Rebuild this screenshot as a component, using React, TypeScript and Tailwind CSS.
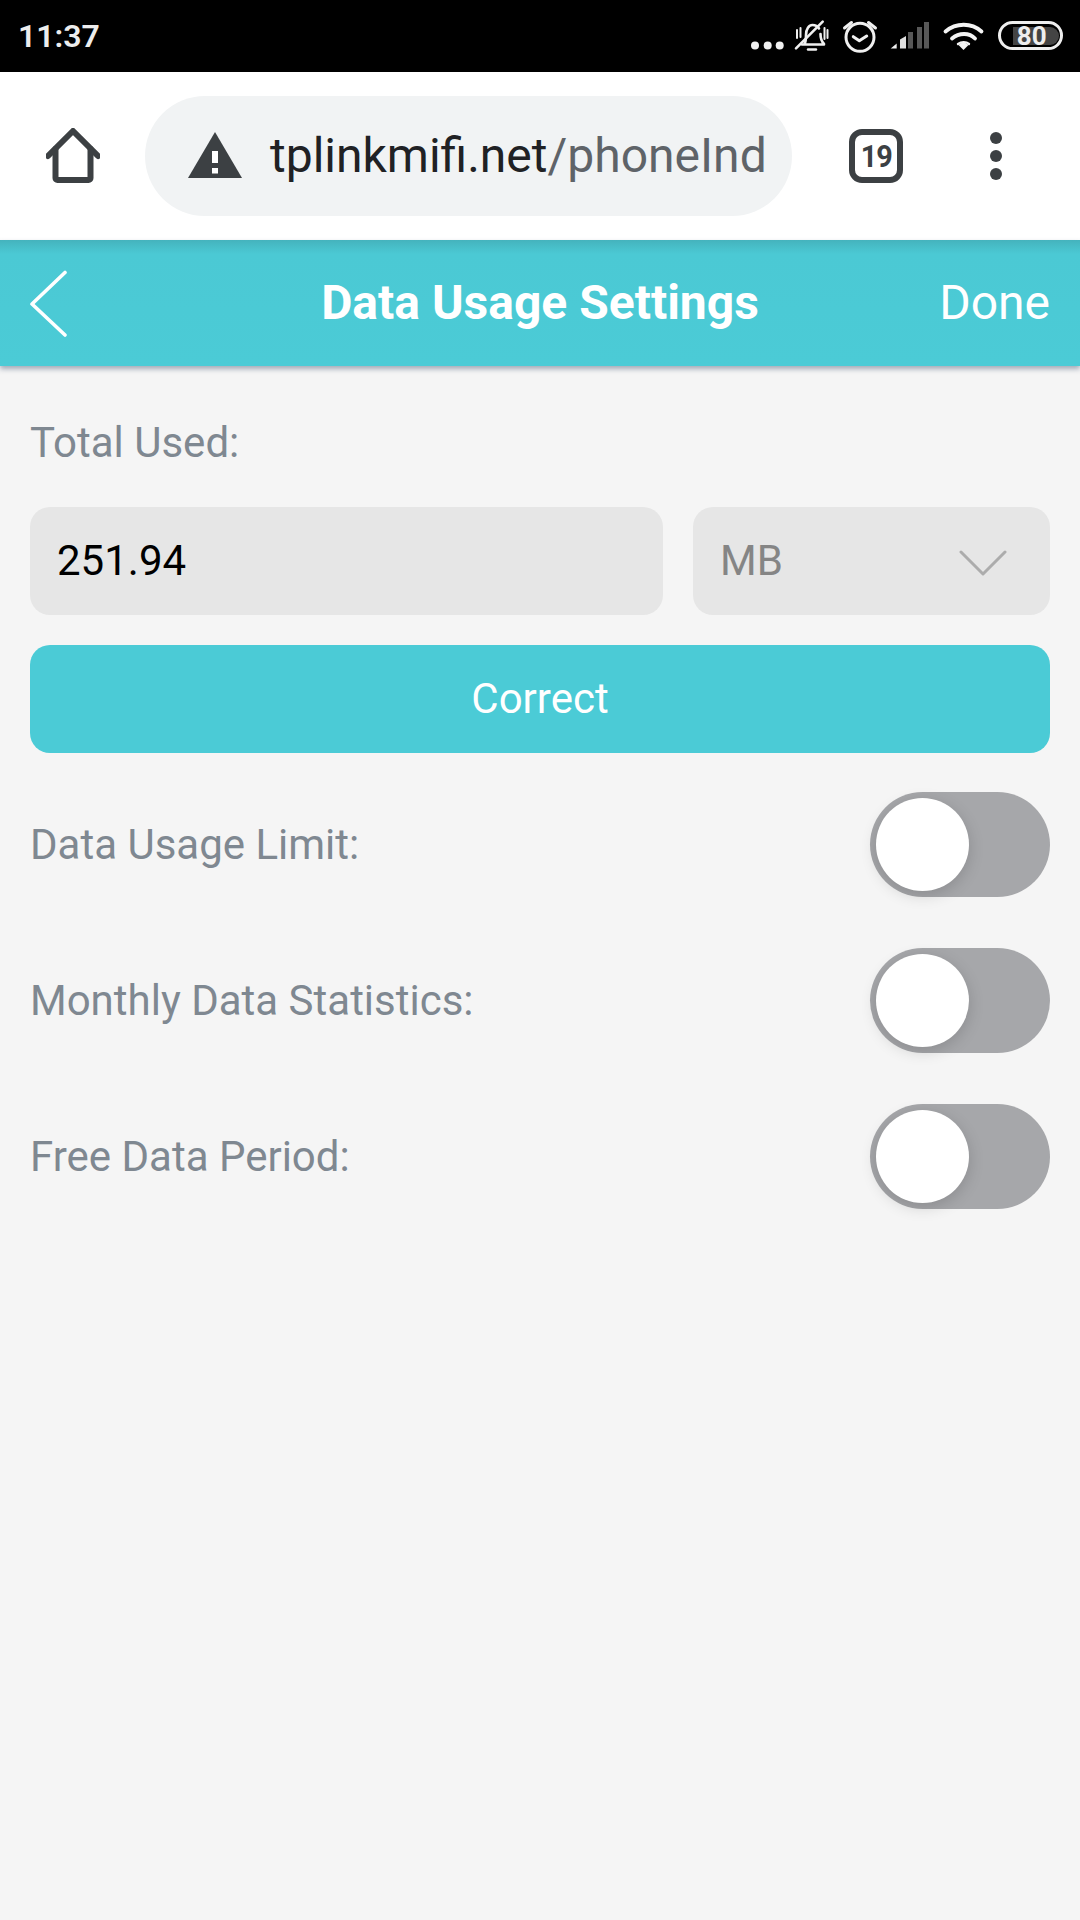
import React from "react";

function StatusIcons() {
  return (
    <svg width="320" height="40" viewBox="0 0 320 40" fill="none" className="block">
      <g fill="#f2f2f2">
        <circle cx="9" cy="29.500" r="4" />
        <circle cx="21.700" cy="29.500" r="4" />
        <circle cx="33.700" cy="29.500" r="4" />
      </g>
      <g stroke="#f0f0f0" strokeWidth="2.600" strokeLinecap="round" strokeLinejoin="round">
        <path d="M56 28.500h22M58.500 28c1.500-2.500 1.500-5 1.500-9c0-6 3-10 6.500-10c3 0 5 1 6.500 3.500M74.500 18c0 4 1 7.500 3.500 10" />
        <path d="M50 32.300L76.700 5.700" />
        <path d="M62 33.500h8" strokeWidth="2.400" />
        <path d="M51 14v8M54.500 12v9M78.500 12v11M81.500 14v8" strokeWidth="2" />
      </g>
      <g stroke="#f0f0f0" strokeWidth="3" strokeLinecap="round" strokeLinejoin="round">
        <circle cx="114" cy="21.300" r="14" />
        <path d="M107.300 20.700l6 4l7.400-4.700" />
        <path d="M98.500 12l7-5.500M122.500 6.500l7 5.500" />
      </g>
      <path d="M144.700 32.500l6-5V32.500z" fill="#f0f0f0" />
      <path d="M154 32.500V23.500l6-3.500V32.500z" fill="#e0e0e0" />
      <rect x="162" y="16" width="5" height="16.500" fill="#585858" />
      <rect x="171" y="11" width="5" height="21.500" fill="#585858" />
      <rect x="178" y="6" width="5" height="26.500" fill="#585858" />
      <g stroke="#f4f4f4" strokeWidth="3.800" strokeLinecap="round">
        <path d="M199.500 15.500c10.500-9 26-9 36 0" />
        <path d="M206 22.500c7-6 17.500-6 23 0" />
        <path d="M212 28c3.500-2.500 8-2.500 11 0" strokeWidth="2.400" />
      </g>
      <path d="M212.500 29l5-3.500l5 3.500l-5 5z" fill="#f4f4f4" />
      <rect x="253.500" y="6.500" width="62" height="26" rx="13" stroke="#eeeeee" strokeWidth="3" />
      <path d="M267 11H304a9 9 0 0 1 0 18H267z" fill="#444444" />
      <text x="285.700" y="29" textAnchor="middle" fill="#eeeeee" fontSize="26" fontWeight="700" fontFamily="Roboto, sans-serif">80</text>
    </svg>
  );
}

function Toggle() {
  return (
    <div className="relative h-[105px] w-[180px] rounded-full bg-[#a6a7aa]">
      <div className="absolute left-[6px] top-[6px] h-[93px] w-[93px] rounded-full bg-white shadow-[0_4px_16px_rgba(0,0,0,0.16)]" />
    </div>
  );
}

function Row({ label }: { label: string }) {
  return (
    <div className="flex h-[105px] items-center justify-between">
      <span className="text-[42px] leading-none text-[#7f8891]">{label}</span>
      <Toggle />
    </div>
  );
}

export default function App() {
  return (
    <div className="flex h-[1920px] w-[1080px] flex-col overflow-hidden bg-[#f5f5f5] font-[Roboto,sans-serif]">
      <div className="flex h-[72px] shrink-0 items-center justify-between bg-black pl-[18px] pr-[14px]">
        <span className="text-[32px] font-semibold leading-none text-[#ededed]">11:37</span>
        <StatusIcons />
      </div>

      <div className="flex h-[168px] shrink-0 items-center bg-white">
        <div className="flex w-[145px] justify-center">
          <svg width="54" height="56" viewBox="0 0 54 56" fill="none" stroke="#3c4043" strokeWidth="6" strokeLinecap="round" strokeLinejoin="round">
            <path d="M2 28L27 3L52 28" />
            <path d="M9.500 21V50a2 2 0 0 0 2 2H42.500a2 2 0 0 0 2-2V21" />
          </svg>
        </div>
        <div className="flex h-[120px] w-[647px] items-center overflow-hidden rounded-full bg-[#f1f3f4] pl-[43px]">
          <svg width="54" height="48" viewBox="0 0 54 48" className="shrink-0">
            <path d="M27 0L54 46H0z" fill="#3c4043" />
            <rect x="24" y="19" width="6" height="12" fill="#fff" />
            <rect x="24" y="36" width="6" height="5.500" fill="#fff" />
          </svg>
          <span className="ml-[28px] whitespace-nowrap text-[48px] leading-none text-[#202124]">
            tplinkmifi.net<span className="text-[#5f6368]">/phoneInd</span>
          </span>
        </div>
        <div className="ml-[57px] flex h-[54px] w-[54px] items-center justify-center rounded-[13px] border-[6px] border-[#3c4043]">
          <span className="scale-x-[0.9] text-[32px] font-bold leading-none tracking-[-1px] text-[#3c4043]">19</span>
        </div>
        <div className="ml-[87px] flex flex-col gap-[6px]">
          <div className="h-[12px] w-[12px] rounded-full bg-[#3c4043]" />
          <div className="h-[12px] w-[12px] rounded-full bg-[#3c4043]" />
          <div className="h-[12px] w-[12px] rounded-full bg-[#3c4043]" />
        </div>
      </div>

      <div className="relative z-10 flex h-[126px] shrink-0 items-center justify-between bg-[#4bcbd6] bg-[linear-gradient(#44b3bd,#4bc9d4_14px,#4bcbd6)] px-[30px] shadow-[0_3px_5px_rgba(60,80,110,0.45)]">
        <svg width="40" height="70" viewBox="0 0 40 70" fill="none" stroke="#fff" strokeWidth="3.600" strokeLinecap="round" strokeLinejoin="round" className="mt-[1px]">
          <path d="M35 3.500L2 35L35 66" />
        </svg>
        <span className="absolute inset-x-0 pb-[1px] text-center text-[48px] font-bold leading-none text-white">Data Usage Settings</span>
        <span className="relative pb-[1px] text-[48px] leading-none text-white">Done</span>
      </div>

      <div className="flex flex-col px-[30px]">
        <div className="mt-[58px] text-[42px] leading-[38px] text-[#7f8891]">Total Used:</div>
        <div className="mt-[45px] flex gap-[30px]">
          <div className="flex h-[108px] w-[633px] items-center rounded-[20px] bg-[#e6e6e6] pb-[2px] pl-[27px] text-[42px] text-black">251.94</div>
          <div className="flex h-[108px] flex-1 items-center justify-between rounded-[20px] bg-[#e6e6e6] pl-[27px] pr-[43px]">
            <span className="pb-[2px] text-[42px] text-[#858585]">MB</span>
            <svg width="48" height="28" viewBox="0 0 48 28" fill="none" stroke="#acacac" strokeWidth="3" strokeLinecap="round" strokeLinejoin="round" className="mt-[3px]">
              <path d="M2 3L24 25L46 3" />
            </svg>
          </div>
        </div>
        <div className="mt-[30px] flex h-[108px] items-center justify-center rounded-[20px] bg-[#4bcbd6] pb-[2px] text-[42px] text-white">Correct</div>
        <div className="mt-[39px] flex flex-col gap-[51px]">
          <Row label="Data Usage Limit:" />
          <Row label="Monthly Data Statistics:" />
          <Row label="Free Data Period:" />
        </div>
      </div>
    </div>
  );
}
